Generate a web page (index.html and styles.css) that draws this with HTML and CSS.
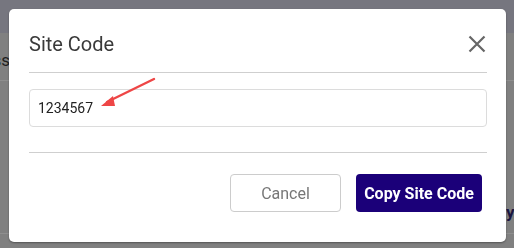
FILE: index.html
```html
<!DOCTYPE html>
<html>
<head>
<meta charset="utf-8">
<link rel="stylesheet" href="styles.css">
</head>
<body>
<div class="page">
  <div class="topbar"></div>
  <div class="row row-first">
    <div class="cell-left"><span>Business</span></div>
  </div>
  <div class="row row-second">
    <div class="cell-right"><span>y</span></div>
  </div>
</div>
<div class="modal">
  <div class="modal-header">
    <h2 class="modal-title">Site Code</h2>
    <button class="close" aria-label="Close">
      <svg width="18" height="18" viewBox="0 0 18 18"><path d="M1.5 1.5 L16.5 16.5 M16.5 1.5 L1.5 16.5" stroke="#666" stroke-width="2.2" fill="none"/></svg>
    </button>
  </div>
  <div class="modal-body">
    <div class="field">1234567</div>
  </div>
  <div class="modal-footer">
    <button class="btn btn-cancel">Cancel</button>
    <button class="btn btn-primary">Copy Site Code</button>
  </div>
  <svg class="arrow" width="70" height="40" viewBox="0 0 70 40">
    <line x1="65" y1="2" x2="18" y2="25" stroke="#ee4646" stroke-width="2.4" stroke-linecap="round"/>
    <polygon points="12,29 24,19 26,29" fill="#ee4646"/>
  </svg>
</div>
</body>
</html>
```
FILE: styles.css
```css
html, body {
  margin: 0;
  padding: 0;
}
body {
  width: 514px;
  height: 248px;
  overflow: hidden;
  background: #808080;
  font-family: Roboto, "Liberation Sans", sans-serif;
}
.page {
  display: flex;
  flex-direction: column;
}
.topbar {
  height: 33px;
  background: #76767f;
}
.row {
  display: flex;
  border-bottom: 1px solid #8e8e8e;
}
.row-first {
  height: 47px;
}
.cell-left {
  width: 10px;
  overflow: hidden;
  display: flex;
  justify-content: flex-end;
  padding-top: 17px;
  font-size: 17px;
  color: #1e1e1e;
  white-space: nowrap;
}
.row-second {
  height: 152px;
  justify-content: flex-end;
}
.cell-right {
  width: 8px;
  overflow: hidden;
  padding-top: 121px;
  font-size: 17px;
  font-weight: 700;
  color: #1a1640;
}
.modal {
  position: fixed;
  left: 9px;
  top: 9px;
  width: 497px;
  height: 233px;
  box-sizing: border-box;
  background: #fff;
  border-radius: 5px;
  padding: 0 19px 0 20px;
  box-shadow: 0 1px 2px rgba(0,0,0,0.35);
}
.modal-header {
  display: flex;
  align-items: center;
  justify-content: space-between;
  padding: 23px 0 16px;
  height: 24px;
  border-bottom: 1px solid #cfcfcf;
}
.modal-title {
  margin: 0;
  font-size: 20px;
  line-height: 24px;
  font-weight: 400;
  color: #3a3a3a;
}
.close {
  border: 0;
  background: none;
  padding: 0;
  margin-right: 1px;
  width: 18px;
  height: 18px;
  display: flex;
}
.modal-body {
  padding: 16px 0 25px;
  border-bottom: 1px solid #cfcfcf;
}
.field {
  height: 36px;
  border: 1px solid #dcdcdc;
  border-radius: 4px;
  display: flex;
  align-items: center;
  padding-left: 8px;
  font-size: 14px;
  color: #222;
}
.modal-footer {
  display: flex;
  justify-content: flex-end;
  gap: 15px;
  padding: 21px 5px 0 0;
}
.btn {
  height: 38px;
  border-radius: 4px;
  font-family: Roboto, "Liberation Sans", sans-serif;
  font-size: 16px;
  padding: 0;
  box-sizing: border-box;
}
.btn-cancel {
  width: 111px;
  background: #fff;
  border: 1px solid #cccccc;
  color: #777;
}
.btn-primary {
  width: 126px;
  background: #1b0079;
  border: 0;
  color: #fff;
  font-weight: 700;
}
.arrow {
  position: absolute;
  left: 80px;
  top: 68px;
}
```
